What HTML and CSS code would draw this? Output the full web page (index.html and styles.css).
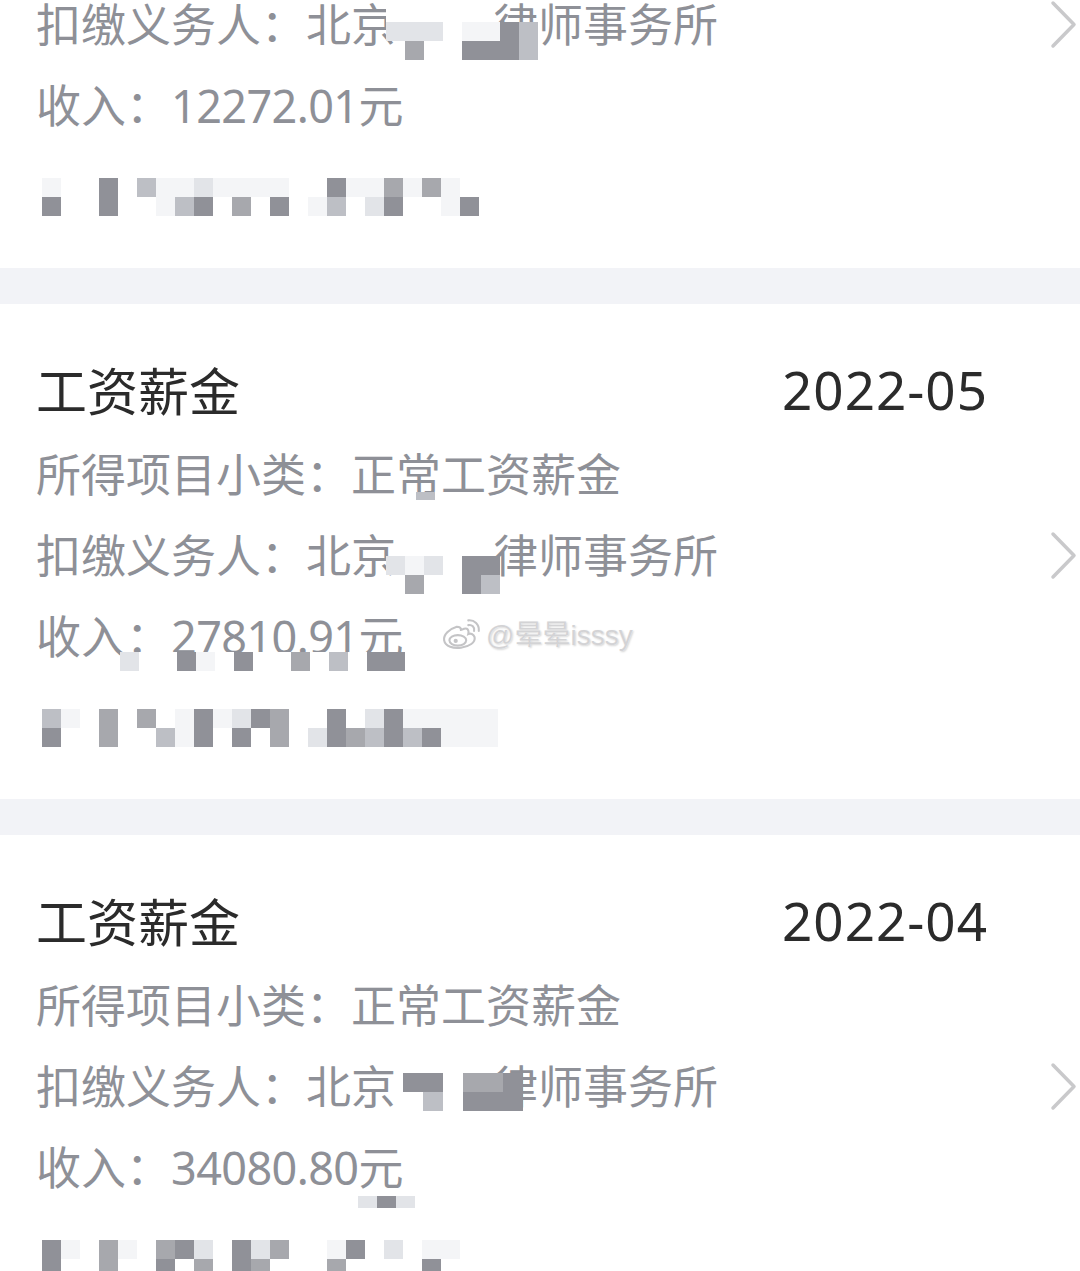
FILE: index.html
```html
<!DOCTYPE html>
<html lang="zh-CN">
<head>
  <meta charset="UTF-8">
  <meta name="viewport" content="width=device-width, initial-scale=1.0">
  <title>收入纳税明细</title>
  <link rel="stylesheet" href="styles.css">
</head>
<body>
  <div class="list">
    <!-- 上一条，已向上滚出一部分 -->
    <div class="card">
      <div class="card-main">
        <div class="card-head">
          <span class="card-title">工资薪金</span>
          <span class="card-date">2022-06</span>
        </div>
        <div class="card-line">所得项目小类：正常工资薪金</div>
        <div class="card-line"><div class="cover cover-a">
            <i class="w"></i><i></i><i></i><i></i><i></i><i></i><i></i><i></i>
            <i class="m4"></i><i class="m4"></i><i class="m4"></i><i class="w"></i><i class="m5"></i><i class="m5"></i><i class="m1"></i><i class="m3"></i>
            <i></i><i class="m2"></i><i></i><i></i><i class="m1"></i><i class="m1"></i><i class="m1"></i><i class="m3"></i>
          </div>扣缴义务人：北京<span class="gap"></span>律师事务所</div>
        <div class="card-line">收入：<span class="num">12272.01</span>元</div>
        <div class="mosaic">
          <i class="m5"></i><i></i><i></i><i class="m1"></i><i></i><i class="m3"></i><i class="m5"></i><i class="m5"></i><i class="m4"></i><i class="m5"></i><i class="m5"></i><i class="m5"></i><i class="m5"></i><i></i><i></i><i class="m1"></i><i class="m5"></i><i class="m5"></i><i class="m2"></i><i class="m5"></i><i class="m2"></i><i class="m5"></i><i></i><i></i>
          <i class="m1"></i><i></i><i></i><i class="m1"></i><i></i><i></i><i class="m5"></i><i class="m3"></i><i class="m1"></i><i></i><i class="m2"></i><i></i><i class="m1"></i><i></i><i class="m5"></i><i class="m3"></i><i></i><i class="m4"></i><i class="m1"></i><i></i><i></i><i class="m5"></i><i class="m1"></i><i></i>
        </div>
      </div>
      <svg class="card-arrow" viewBox="0 0 27 49"><polyline points="3,3 24,24.5 3,46"/></svg>
    </div>

    <div class="card">
      <div class="card-main">
        <div class="card-head">
          <span class="card-title">工资薪金</span>
          <span class="card-date">2022-05</span>
        </div>
        <div class="card-line"><div class="cover cover-d"><i class="m3"></i></div>所得项目小类：正常工资薪金</div>
        <div class="card-line"><div class="cover cover-b">
            <i class="m4"></i><i class="m5"></i><i class="m4"></i><i></i><i class="m1"></i><i class="m1"></i>
            <i></i><i class="m2"></i><i></i><i></i><i class="m1"></i><i class="m3"></i>
          </div>扣缴义务人：北京<span class="gap"></span>律师事务所</div>
        <div class="card-line"><div class="cover cover-e">
            <i class="m4"></i><i class="w"></i><i class="w"></i><i class="m1"></i><i class="m5"></i><i class="w"></i><i class="m1"></i><i class="w"></i><i class="w"></i><i class="m2"></i><i class="w"></i><i class="m3"></i><i class="w"></i><i class="m1"></i><i class="m1"></i>
          </div>收入：<span class="num">27810.91</span>元</div>
        <div class="mosaic">
          <i class="m3"></i><i class="m5"></i><i></i><i class="m2"></i><i></i><i class="m2"></i><i></i><i class="m5"></i><i class="m1"></i><i class="m5"></i><i class="m4"></i><i class="m1"></i><i class="m2"></i><i></i><i></i><i class="m1"></i><i></i><i class="m4"></i><i class="m1"></i><i class="m5"></i><i class="m5"></i><i class="m5"></i><i class="m5"></i><i class="m5"></i>
          <i class="m1"></i><i></i><i></i><i class="m2"></i><i></i><i></i><i class="m3"></i><i class="m5"></i><i class="m1"></i><i></i><i class="m1"></i><i></i><i class="m2"></i><i></i><i class="m4"></i><i class="m1"></i><i class="m2"></i><i class="m3"></i><i class="m1"></i><i class="m3"></i><i class="m1"></i><i class="m5"></i><i class="m5"></i><i class="m5"></i>
        </div>
      </div>
      <svg class="card-arrow" viewBox="0 0 27 49"><polyline points="3,3 24,24.5 3,46"/></svg>
    </div>

    <div class="card">
      <div class="card-main">
        <div class="card-head">
          <span class="card-title">工资薪金</span>
          <span class="card-date">2022-04</span>
        </div>
        <div class="card-line">所得项目小类：正常工资薪金</div>
        <div class="card-line"><div class="cover cover-c">
            <i class="m1"></i><i class="m1"></i><i></i><i class="m2"></i><i class="m2"></i><i class="m1"></i>
            <i></i><i class="m3"></i><i></i><i class="m1"></i><i class="m1"></i><i class="m1"></i>
          </div>扣缴义务人：北京<span class="gap"></span>律师事务所</div>
        <div class="card-line"><div class="cover cover-f">
            <i class="m4"></i><i class="m1"></i><i class="m4"></i>
          </div>收入：<span class="num">34080.80</span>元</div>
        <div class="mosaic">
          <i class="m1"></i><i class="m5"></i><i></i><i class="m2"></i><i class="m5"></i><i></i><i class="m2"></i><i class="m1"></i><i class="m4"></i><i></i><i class="m1"></i><i class="m4"></i><i class="m2"></i><i></i><i></i><i class="m5"></i><i class="m1"></i><i></i><i class="m4"></i><i></i><i class="m5"></i><i class="m5"></i><i></i><i></i>
          <i class="m1"></i><i></i><i></i><i class="m2"></i><i></i><i></i><i class="m1"></i><i></i><i class="m2"></i><i></i><i class="m1"></i><i class="m2"></i><i></i><i></i><i></i><i class="m2"></i><i></i><i></i><i></i><i></i><i class="m1"></i><i></i><i></i><i></i>
        </div>
      </div>
      <svg class="card-arrow" viewBox="0 0 27 49"><polyline points="3,3 24,24.5 3,46"/></svg>
    </div>
  </div>

  <!-- 水印 -->
  <div class="watermark">
    <svg class="wb-logo" viewBox="0 0 40 32">
      <path class="wb-body" d="M15 10 C8 12 2 18 3 23 C4 29 12 31 19 30 C27 29 33 25 32 20 C31 17 28 16 26 17 C27 13 25 11 22 12 C20 13 19 13 19 13 C19 11 18 10 15 10 Z"/>
      <ellipse class="wb-line" cx="16" cy="23" rx="8" ry="5"/>
      <circle class="wb-dot" cx="14" cy="23.5" r="2"/>
      <path class="wb-line" d="M26 4 A9 9 0 0 1 36 14"/>
      <path class="wb-line" d="M26 8.5 A4.5 4.5 0 0 1 31.5 14"/>
    </svg>
    <span class="wb-name">@晕晕isssy</span>
  </div>
</body>
</html>
```

FILE: styles.css
```css
/* 页面 */
* {
  box-sizing: border-box;
  margin: 0;
  padding: 0;
}

body {
  position: relative;
  width: 1080px;
  height: 1271px;
  overflow: hidden;
  background: #ffffff;
  font-family: "Noto Sans", "Noto Sans CJK SC", sans-serif;
}

/* 列表（已向下滚动） */
.list {
  display: flex;
  flex-direction: column;
  gap: 36px;
  margin-top: -227px;
  background-color: #f2f3f7;
}

.card {
  display: flex;
  height: 495px;
  background-color: #ffffff;
}

.card-main {
  flex: 1;
  padding: 45px 0 0 36px;
}

.card-head {
  display: flex;
  justify-content: space-between;
  align-items: center;
  height: 80px;
  margin-bottom: 5px;
  color: #2b2b2b;
}

.card-title {
  font-size: 51px;
}

.card-date {
  font-size: 53px;
  letter-spacing: 1px;
}

.card-line {
  position: relative;
  font-size: 45px;
  line-height: 81px;
  color: #8e9097;
  white-space: nowrap;
}

.num {
  letter-spacing: -0.6px;
}

.gap {
  display: inline-block;
  width: 97px;
}

.card-arrow {
  align-self: center;
  width: 27px;
  height: 49px;
  margin: 8px 3px 0 62px;
}

.card-arrow polyline {
  fill: none;
  stroke: #c9c9cb;
  stroke-width: 3.5;
  stroke-linecap: round;
  stroke-linejoin: round;
}

/* 马赛克 */
.mosaic {
  display: grid;
  grid-template-columns: repeat(24, 19px);
  grid-auto-rows: 19px;
  margin: 32px 0 0 6px;
}

.cover {
  position: absolute;
  display: grid;
  grid-auto-rows: 19px;
}

.cover-a { left: 350px; top: 19px; grid-template-columns: repeat(8, 19px); }
.cover-b { left: 350px; top: 41px; grid-template-columns: repeat(6, 19px); }
.cover-c { left: 367px; top: 27px; grid-template-columns: repeat(6, 20px); }
.cover-d { left: 380px; top: 58px; grid-template-columns: 19px; grid-auto-rows: 8px; }
.cover-e { left: 84px; top: 56px; grid-template-columns: repeat(15, 19px); }
.cover-f { left: 322px; top: 69px; grid-template-columns: repeat(3, 19px); grid-auto-rows: 12px; }

.w  { background-color: #ffffff; }
.m1 { background-color: #909198; }
.m2 { background-color: #a7a8ad; }
.m3 { background-color: #bdbfc5; }
.m4 { background-color: #e2e4e8; }
.m5 { background-color: #f4f5f7; }

/* 微博水印 */
.watermark {
  position: absolute;
  left: 441px;
  top: 613px;
  display: flex;
  align-items: center;
  gap: 3px;
}

.wb-logo {
  width: 42px;
  height: 34px;
}

.wb-body {
  fill: #ffffff;
  stroke: #c4c4c6;
  stroke-width: 2;
}

.wb-line {
  fill: none;
  stroke: #c4c4c6;
  stroke-width: 2;
  stroke-linecap: round;
}

.wb-dot {
  fill: #c4c4c6;
}

.wb-name {
  font-family: "Liberation Sans", "Noto Sans CJK SC", sans-serif;
  font-size: 28px;
  color: #d3d3d5;
  text-shadow: 0 0 1px #ffffff, 1px 1px 2px rgba(0, 0, 0, 0.18);
}
```
